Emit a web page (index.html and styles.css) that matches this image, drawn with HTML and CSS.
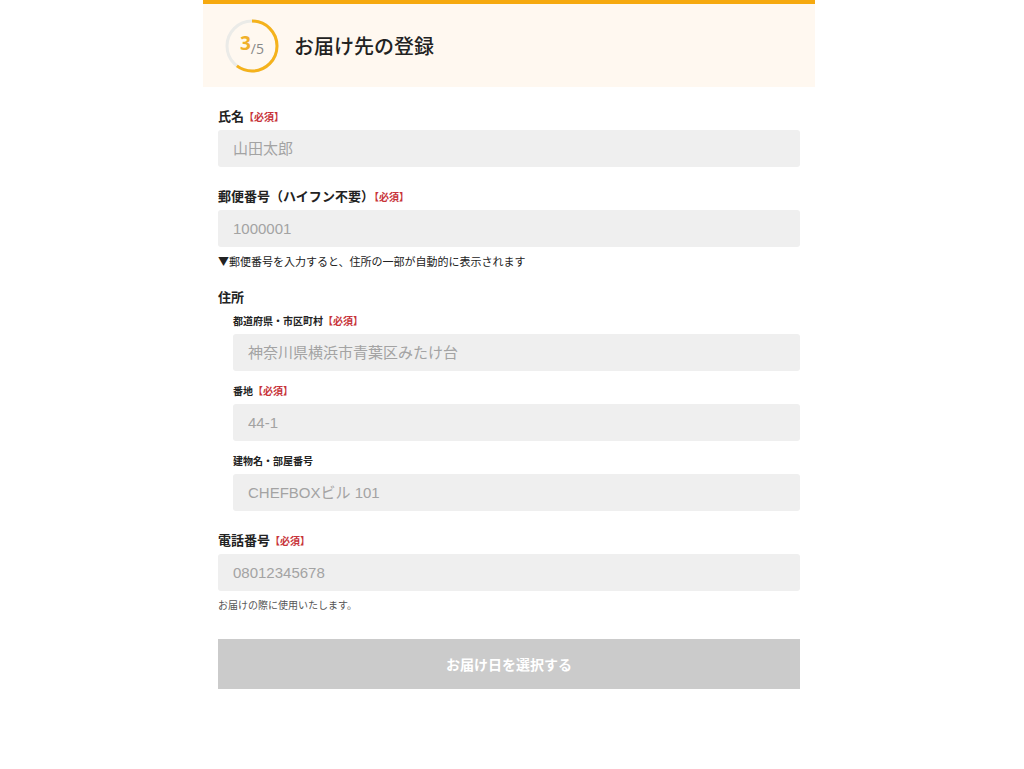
FILE: index.html
```html
<!DOCTYPE html>
<html lang="ja">
<head>
    <meta charset="UTF-8">
    <meta name="viewport" content="width=device-width, initial-scale=1.0">
    <title>お届け先の登録</title>
    <link rel="stylesheet" href="styles.css">
</head>
<body>
    <div class="container">
        <div class="header">
            <div class="step">
                <svg class="step-ring" width="54" height="54" viewBox="0 0 54 54">
                    <circle cx="27" cy="27" r="25" fill="none" stroke="#ebebe8" stroke-width="3"/>
                    <circle cx="27" cy="27" r="25" fill="none" stroke="#f5b21b" stroke-width="3"
                            stroke-dasharray="94.2 157.1" transform="rotate(-90 27 27)"/>
                </svg>
                <span class="step-num">3</span><span class="step-total">/5</span>
            </div>
            <h1>お届け先の登録</h1>
        </div>

        <form class="form">
            <div class="field">
                <label>氏名<span class="req">【必須】</span></label>
                <input type="text" placeholder="山田太郎">
            </div>

            <div class="field">
                <label>郵便番号（ハイフン不要）<span class="req">【必須】</span></label>
                <input type="text" placeholder="1000001">
                <p class="note">▼郵便番号を入力すると、住所の一部が自動的に表示されます</p>
            </div>

            <div class="field">
                <label>住所</label>
                <div class="sub">
                    <div class="sub-field">
                        <label>都道府県・市区町村<span class="req">【必須】</span></label>
                        <input type="text" placeholder="神奈川県横浜市青葉区みたけ台">
                    </div>
                    <div class="sub-field">
                        <label>番地<span class="req">【必須】</span></label>
                        <input type="text" placeholder="44-1">
                    </div>
                    <div class="sub-field">
                        <label>建物名・部屋番号</label>
                        <input type="text" placeholder="CHEFBOXビル 101">
                    </div>
                </div>
            </div>

            <div class="field">
                <label>電話番号<span class="req">【必須】</span></label>
                <input type="text" placeholder="08012345678">
                <p class="note light">お届けの際に使用いたします。</p>
            </div>

            <button type="button" class="submit" disabled>お届け日を選択する</button>
        </form>
    </div>
</body>
</html>
```

FILE: styles.css
```css
body {
    margin: 0;
    background: #fff;
    font-family: 'Noto Sans CJK JP', 'Noto Sans', sans-serif;
    color: #222;
}
.container {
    width: 612px;
    margin-left: calc(50% - 309px);
}
.header {
    display: flex;
    align-items: center;
    height: 83px;
    padding-left: 22px;
    background: #fff8f0;
    border-top: 4px solid #f6a90f;
}
.step {
    position: relative;
    width: 54px;
    height: 54px;
    display: flex;
    align-items: center;
    justify-content: center;
    margin-right: 15px;
}
.step-ring {
    position: absolute;
    top: 0;
    left: 0;
}
.step-num {
    font-family: 'Open Sans', sans-serif;
    font-size: 19px;
    font-weight: bold;
    color: #f0b02a;
    margin-top: -6px;
}
.step-total {
    font-family: 'Open Sans', sans-serif;
    font-size: 14px;
    color: #888;
    margin-top: 6px;
}
h1 {
    margin: 0;
    font-size: 20px;
    font-weight: 500;
    color: #222;
}
.form {
    padding: 20px 15px 80px;
}
.field {
    margin-bottom: 20px;
}
label {
    display: block;
    font-size: 13px;
    font-weight: bold;
    line-height: 18px;
    margin-bottom: 4px;
}
.req {
    color: #c8343a;
    font-size: 10px;
}
input {
    display: block;
    width: 100%;
    height: 37px;
    box-sizing: border-box;
    border: none;
    border-radius: 3px;
    background: #efefef;
    padding: 0 15px;
    font-family: 'Liberation Sans', 'Noto Sans CJK JP', sans-serif;
    font-size: 15px;
    color: #333;
}
input::placeholder {
    color: #a3a3a3;
}
.note {
    margin: 7px 0 0;
    font-size: 11px;
    line-height: 14px;
    color: #222;
}
.note.light {
    color: #555;
    font-size: 10px;
}
.sub {
    padding-left: 15px;
    margin-top: 8px;
}
.sub-field {
    margin-bottom: 13px;
}
.sub-field:last-child {
    margin-bottom: 0;
}
.sub-field label {
    font-size: 10px;
    line-height: 14px;
    margin-bottom: 6px;
}
.submit {
    display: block;
    width: 100%;
    height: 50px;
    margin-top: 27px;
    border: none;
    background: #cbcbcb;
    color: #fff;
    font-family: 'Noto Sans CJK JP', sans-serif;
    font-size: 14px;
    font-weight: bold;
}
```
